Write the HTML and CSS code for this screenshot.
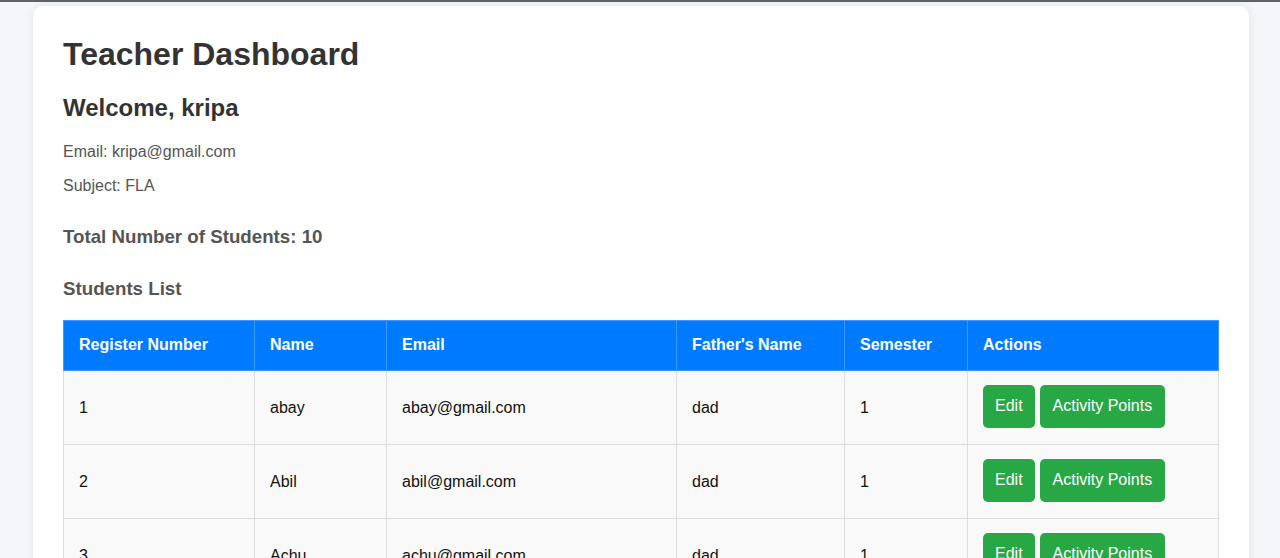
FILE: index.html
```html
<!DOCTYPE html>
<html>
<head>
<meta charset="utf-8">
<title>Teacher Dashboard</title>
<link rel="stylesheet" href="styles.css">
</head>
<body>
<div class="topline"></div>
<div class="container">
  <h1>Teacher Dashboard</h1>
  <h2>Welcome, kripa</h2>
  <p class="info">Email: kripa@gmail.com</p>
  <p class="info">Subject: FLA</p>
  <h3 class="total">Total Number of Students: 10</h3>
  <h3 class="list">Students List</h3>
  <table class="students">
    <thead>
      <tr>
        <th class="c1">Register Number</th>
        <th class="c2">Name</th>
        <th class="c3">Email</th>
        <th class="c4">Father's Name</th>
        <th class="c5">Semester</th>
        <th class="c6">Actions</th>
      </tr>
    </thead>
    <tbody>
      <tr>
        <td>1</td><td>abay</td><td>abay@gmail.com</td><td>dad</td><td>1</td>
        <td class="act"><div class="actions"><button class="btn">Edit</button><button class="btn">Activity Points</button></div></td>
      </tr>
      <tr>
        <td>2</td><td>Abil</td><td>abil@gmail.com</td><td>dad</td><td>1</td>
        <td class="act"><div class="actions"><button class="btn">Edit</button><button class="btn">Activity Points</button></div></td>
      </tr>
      <tr>
        <td>3</td><td>Achu</td><td>achu@gmail.com</td><td>dad</td><td>1</td>
        <td class="act"><div class="actions"><button class="btn">Edit</button><button class="btn">Activity Points</button></div></td>
      </tr>
    </tbody>
  </table>
</div>
</body>
</html>
```
FILE: styles.css
```css
html, body {
  margin: 0;
  padding: 0;
  background: #f4f6fa;
  font-family: "Liberation Sans", Arial, sans-serif;
  overflow: hidden;
  height: 558px;
}
.topline {
  height: 2px;
  background: #5f6368;
}
.container {
  width: 1156px;
  margin: 4px 0 0 33px;
  padding: 30px;
  background: #fff;
  border-radius: 10px;
  box-shadow: 0 0 10px rgba(0, 0, 0, 0.08);
}
h1 {
  margin: 0 0 21px;
  font-size: 32px;
  color: #333;
}
h2 {
  margin: 0 0 21px;
  font-size: 24px;
  color: #333;
}
.info {
  margin: 0 0 16px;
  font-size: 16px;
  line-height: 18px;
  color: #555;
}
h3 {
  font-size: 18.72px;
  color: #555;
}
.total {
  margin: 31px 0 20px;
}
.list {
  margin: 30px 0 20px;
}
.students {
  width: 100%;
  border-collapse: collapse;
  font-size: 16px;
}
.students th, .students td {
  border: 1px solid #ddd;
  text-align: left;
}
.students th {
  background: #007bff;
  color: #fff;
  font-weight: bold;
  border-color: #3d9bff;
  padding: 15px 15px 16px;
}
.students td {
  background: #f9f9f9;
  color: #111;
  padding: 15px;
}
.students td.act {
  padding: 14px 15px 16px;
}
.c1 { width: 160px; }
.c2 { width: 101px; }
.c3 { width: 259px; }
.c4 { width: 137px; }
.c5 { width: 92px; }
.actions {
  display: flex;
  gap: 5px;
}
.btn {
  background: #28a745;
  color: #fff;
  border: none;
  border-radius: 5px;
  padding: 12px 13px 13px;
  font-family: "Liberation Sans", Arial, sans-serif;
  font-size: 16px;
  line-height: 18px;
  cursor: pointer;
}
.btn:first-child {
  padding: 12px 12px 13px;
}
```
